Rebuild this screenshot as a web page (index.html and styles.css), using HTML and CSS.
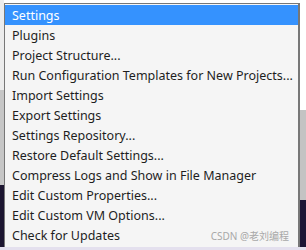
FILE: index.html
```html
<!DOCTYPE html>
<html>
<head>
    <meta charset="UTF-8">
    <link rel="stylesheet" href="styles.css">
</head>
<body>
    <div class="desk">
        <div class="side side-left"></div>
        <div class="menu">
            <div class="menu-item menu-item-active">Settings</div>
            <div class="menu-item">Plugins</div>
            <div class="menu-item">Project Structure...</div>
            <div class="menu-item">Run Configuration Templates for New Projects...</div>
            <div class="menu-item">Import Settings</div>
            <div class="menu-item">Export Settings</div>
            <div class="menu-item">Settings Repository...</div>
            <div class="menu-item">Restore Default Settings...</div>
            <div class="menu-item">Compress Logs and Show in File Manager</div>
            <div class="menu-item">Edit Custom Properties...</div>
            <div class="menu-item">Edit Custom VM Options...</div>
            <div class="menu-item menu-item-last">
                <span>Check for Updates</span>
                <span class="watermark">CSDN @老刘编程</span>
            </div>
        </div>
        <div class="side side-right"></div>
    </div>
    <div class="bottom"></div>
</body>
</html>
```

FILE: styles.css
```css
body {
    margin: 0;
    width: 306px;
    height: 250px;
    overflow: hidden;
    font-family: "Noto Sans", "Noto Sans CJK SC", sans-serif;
    background: #ffffff;
}

.desk {
    display: flex;
    height: 247px;
}

.side {
    width: 4px;
}

.side-left {
    background: linear-gradient(#ececec 0, #ececec 90px, #c6c6c6 90px, #c6c6c6 185px, #1c1530 185px);
}

.side-right {
    width: 6px;
    background: linear-gradient(#ffffff 0, #ffffff 110px, #c3c3c3 110px, #c3c3c3 200px, #1d1535 200px);
}

.menu {
    width: 294px;
    margin-top: 3px;
    padding: 1px 0 2px;
    background: #f5f5f5;
    border: 1px solid #777777;
    border-right-width: 2px;
    border-bottom: none;
}

.menu-item {
    display: flex;
    align-items: center;
    height: 20px;
    padding-left: 7px;
    font-size: 12.5px;
    color: #1e1e1e;
    white-space: nowrap;
}

.menu-item-active {
    background: #3592fe;
    color: #ffffff;
}

.menu-item-last {
    justify-content: space-between;
    padding-right: 9px;
}

.watermark {
    font-size: 10px;
    color: #a8a8a8;
}

.bottom {
    height: 3px;
    background: #e4e0ee;
}
```
